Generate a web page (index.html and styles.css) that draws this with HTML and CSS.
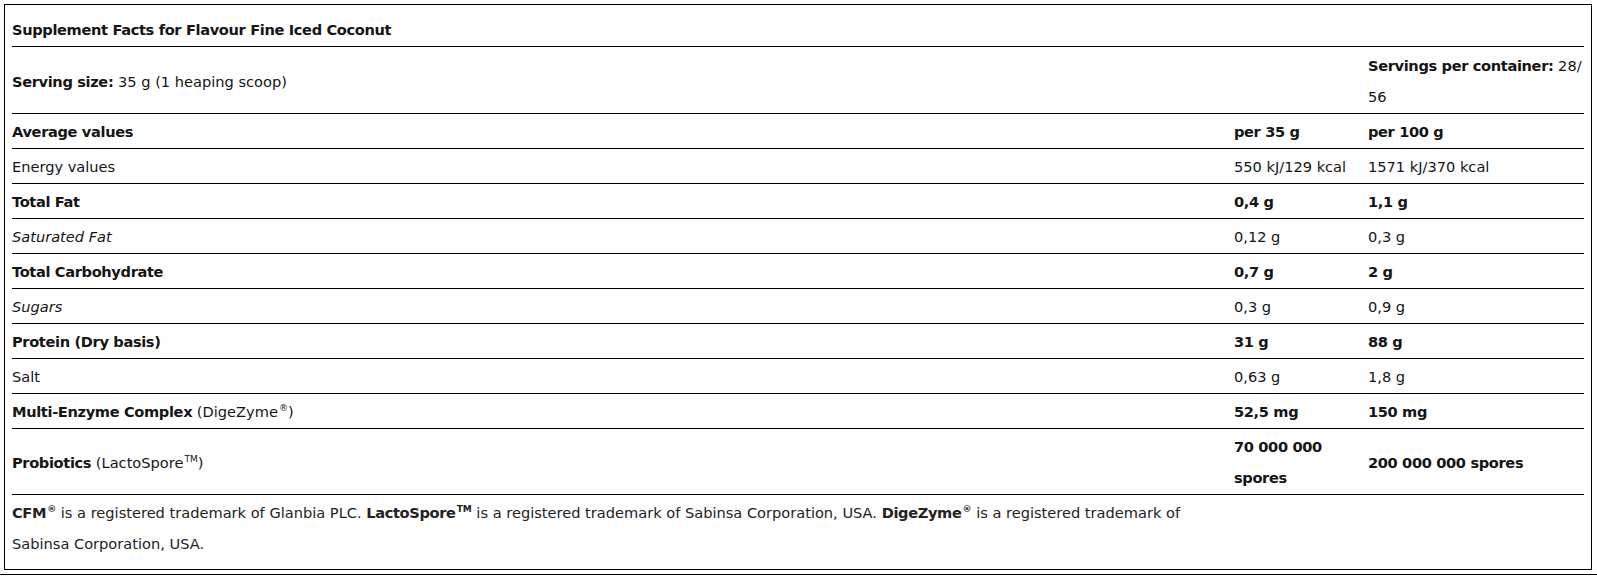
FILE: index.html
```html
<!DOCTYPE html>
<html lang="en">
<head>
<meta charset="utf-8">
<title>Supplement Facts</title>
<link rel="stylesheet" href="styles.css">
</head>
<body>
<div class="page">
  <div class="facts">
    <table class="facts-table">
      <colgroup>
        <col class="c-name">
        <col class="c-serv">
        <col class="c-hund">
      </colgroup>
      <tbody>
        <tr><td colspan="3"><b>Supplement Facts for Flavour Fine Iced Coconut</b></td></tr>
        <tr class="serving-row">
          <td><b>Serving size:</b> 35 g (1 heaping scoop)</td>
          <td></td>
          <td><b>Servings per container:</b> 28/<br>56</td>
        </tr>
        <tr><td><b>Average values</b></td><td><b>per 35 g</b></td><td><b>per 100 g</b></td></tr>
        <tr><td>Energy values</td><td>550 kJ/129 kcal</td><td>1571 kJ/370 kcal</td></tr>
        <tr><td><b>Total Fat</b></td><td><b>0,4 g</b></td><td><b>1,1 g</b></td></tr>
        <tr><td><i>Saturated Fat</i></td><td>0,12 g</td><td>0,3 g</td></tr>
        <tr><td><b>Total Carbohydrate</b></td><td><b>0,7 g</b></td><td><b>2 g</b></td></tr>
        <tr><td><i>Sugars</i></td><td>0,3 g</td><td>0,9 g</td></tr>
        <tr><td><b>Protein (Dry basis)</b></td><td><b>31 g</b></td><td><b>88 g</b></td></tr>
        <tr><td>Salt</td><td>0,63 g</td><td>1,8 g</td></tr>
        <tr><td><b>Multi-Enzyme Complex</b> (DigeZyme<sup>®</sup>)</td><td><b>52,5 mg</b></td><td><b>150 mg</b></td></tr>
        <tr><td><b>Probiotics</b> (LactoSpore<sup>TM</sup>)</td><td><b>70 000 000 spores</b></td><td><b>200 000 000 spores</b></td></tr>
        <tr class="note-row">
          <td class="note"><b>CFM<sup>®</sup></b> is a registered trademark of Glanbia PLC. <b>LactoSpore<sup>TM</sup></b> is a registered trademark of Sabinsa Corporation, USA. <b>DigeZyme<sup>®</sup></b> is a registered trademark of Sabinsa Corporation, USA.</td>
          <td></td>
          <td></td>
        </tr>
      </tbody>
    </table>
  </div>
  <div class="rule"></div>
</div>
</body>
</html>
```

FILE: styles.css
```css
html, body {
  margin: 0;
  padding: 0;
  background: #fff;
}

body {
  font-family: "DejaVu Sans", "Liberation Sans", sans-serif;
  font-size: 14.6px;
  color: #151515;
}

.page {
  padding: 4px 5px 0 4px;
}

.facts {
  border: 1px solid #000;
  padding: 7px 7px 7px 7px;
}

.facts-table {
  width: 100%;
  border-collapse: collapse;
  table-layout: fixed;
}

.c-serv { width: 134px; }
.c-hund { width: 216px; }

.facts-table td {
  padding: 2px 0 1px 0;
  line-height: 31px;
  vertical-align: middle;
  border-bottom: 1px solid #000;
  text-align: left;
}

.serving-row td {
  padding-top: 3px;
  padding-bottom: 1px;
}

.facts-table b {
  font-weight: 700;
  letter-spacing: -0.35px;
}

.facts-table i {
  font-style: italic;
}

.facts-table sup {
  font-size: 9px;
  line-height: 1;
  vertical-align: super;
  letter-spacing: 0;
  margin-left: 1px;
}

.note-row td {
  border-bottom: none;
  padding-bottom: 3px;
}

.note {
  color: #222;
}

.rule {
  margin-top: 4px;
  margin-left: -4px;
  margin-right: -5px;
  border-top: 1px solid #000;
}
```
